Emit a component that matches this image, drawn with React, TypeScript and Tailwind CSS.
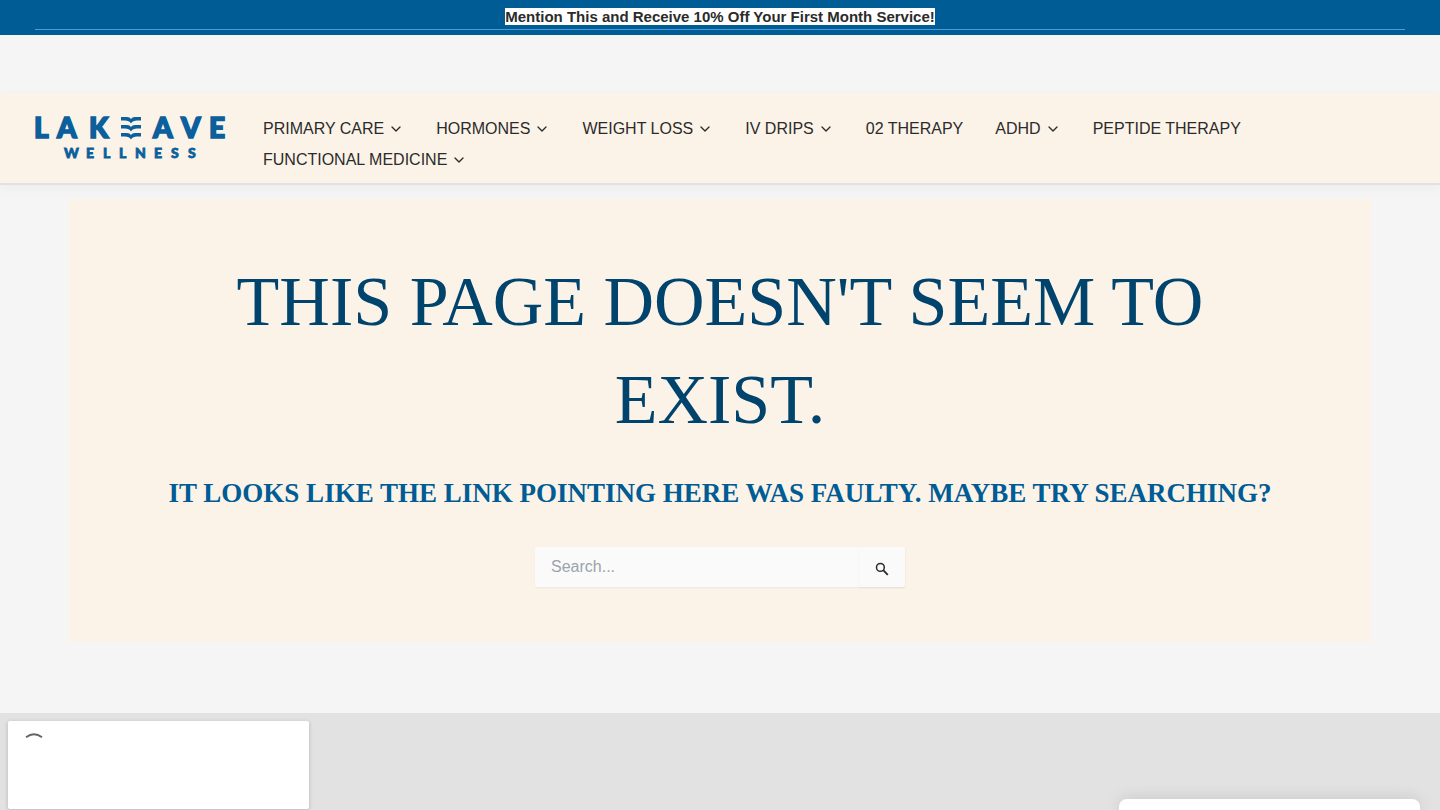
import { ChevronDown } from "lucide-react";

const NAV_ITEMS = [
  { label: "Primary Care", hasMenu: true },
  { label: "Hormones", hasMenu: true },
  { label: "Weight Loss", hasMenu: true },
  { label: "IV Drips", hasMenu: true },
  { label: "02 Therapy", hasMenu: false },
  { label: "ADHD", hasMenu: true },
  { label: "Peptide Therapy", hasMenu: false },
  { label: "Functional Medicine", hasMenu: true },
];

function Logo() {
  return (
    <svg
      viewBox="0 0 190 44"
      className="w-[190px] h-11 overflow-visible fill-[#0a5f9c] stroke-[#0a5f9c] font-['Lato',sans-serif] font-black"
      role="img"
      aria-label="Lake Ave Wellness"
    >
      <text y="22" x="-1 22 54 118 146 174" fontSize="28" strokeWidth="1.6">
        LAKAVE
      </text>
      <text y="42" x="29 51 68 84 100 119 136 153" fontSize="14" strokeWidth="0.8">
        WELLNESS
      </text>
      {/* Three waves standing in for the E */}
      {[0, 8, 16].map((y) => (
        <path
          key={y}
          transform={`translate(86 ${y})`}
          stroke="none"
          d="M0 1h6q3 0 4 2q1-2 4-2h6v3.6h-4q-4 0-6 2.8q-2-2.8-6-2.8H0z"
        />
      ))}
    </svg>
  );
}

function PromoBar() {
  return (
    <div className="bg-[#005c95] px-[35px] pt-2 pb-[5px]">
      <p className="border-b border-[#4d9bd0] pb-1 text-center text-[15px] leading-[17px] font-bold">
        <span className="bg-white">
          Mention This and Receive 10% Off Your First Month Service!
        </span>
      </p>
    </div>
  );
}

function Header() {
  return (
    <header className="mt-[58px] flex items-center gap-[38px] border-b-2 border-[#e4dfe1] bg-[#fcf3e8] px-[35px] pt-5 pb-2 shadow-[0_4px_12px_rgba(0,40,60,0.04)]">
      <a href="#" className="shrink-0 self-start pt-[3px]">
        <Logo />
      </a>
      <nav className="flex flex-wrap gap-x-8 pr-[130px]">
        {NAV_ITEMS.map((item) => (
          <a
            key={item.label}
            href="#"
            className="flex items-center gap-1 text-base leading-[31px] uppercase"
          >
            {item.label}
            {item.hasMenu && <ChevronDown className="w-4 h-4" />}
          </a>
        ))}
      </nav>
    </header>
  );
}

function SearchForm() {
  return (
    <form
      role="search"
      className="mx-auto flex h-10 w-full max-w-[370px] bg-[#fafafa] rounded-xs shadow-xs"
      onSubmit={(e) => e.preventDefault()}
    >
      <input
        type="search"
        aria-label="Search"
        placeholder="Search..."
        className="min-w-0 flex-1 px-4 text-base outline-none placeholder:text-[#9aa3ae]"
      />
      <button
        type="submit"
        aria-label="Submit search"
        className="flex w-[46px] items-center justify-center pt-1 shadow-xs"
      >
        <svg viewBox="0 0 14 14" className="w-[14px] h-[14px]" fill="none" stroke="#2b2b2b">
          <circle cx="5.4" cy="5.4" r="3.9" strokeWidth="1.5" />
          <path d="M8.2 8.2l4.6 4.6" strokeWidth="1.9" />
        </svg>
      </button>
    </form>
  );
}

export default function App() {
  return (
    <div className="flex min-h-screen flex-col bg-[#f5f5f5] font-['Liberation_Sans',Arial,sans-serif] text-[#2b2b2b]">
      <PromoBar />
      <Header />

      <main className="mx-auto mt-[14px] w-full max-w-[1302px] bg-[#fcf3e8] px-16 pt-[54px] pb-[55px] text-center">
        <h1 className="mx-auto max-w-[1100px] font-['Liberation_Serif',serif] text-[70px] leading-[98px] uppercase text-[#00446e]">
          This page doesn't seem to exist.
        </h1>
        <p className="mt-6 mb-[34px] font-['Liberation_Serif',serif] text-[27px] leading-[40px] font-bold uppercase text-[#005c95]">
          It looks like the link pointing here was faulty. Maybe try searching?
        </p>
        <SearchForm />
      </main>

      <footer className="mt-[71px] flex-1 bg-[#e2e2e2]" />

      {/* Loading widget */}
      <div className="fixed bottom-px left-2 h-[88px] w-[301px] rounded-xs bg-white shadow-[0_1px_4px_rgba(0,0,0,0.2)]">
        <svg viewBox="0 0 20 8" className="mt-3 ml-4 w-5 h-2" fill="none" stroke="#666">
          <path d="M2 4.2Q10-1.6 18 4.2" strokeWidth="2" />
        </svg>
      </div>

      {/* Chat panel sliding in */}
      <div className="fixed right-5 bottom-0 h-[11px] w-[301px] rounded-t-lg bg-white shadow-[0_0_16px_rgba(0,0,0,0.14)]" />
    </div>
  );
}
